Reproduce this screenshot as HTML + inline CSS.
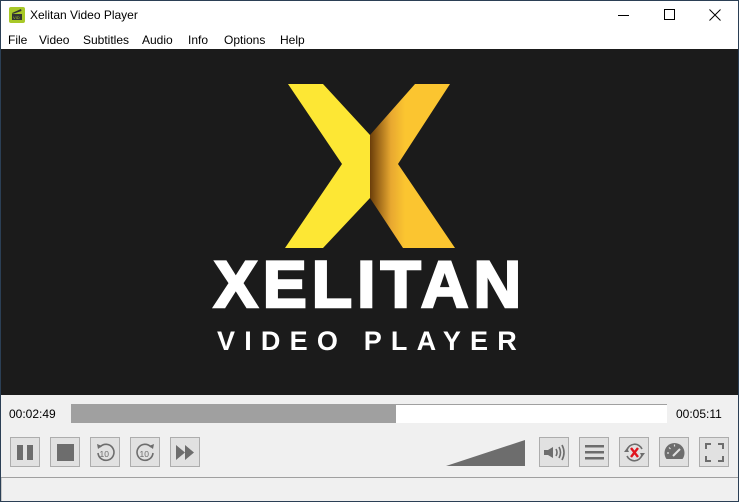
<!DOCTYPE html>
<html><head><meta charset="utf-8"><style>
*{margin:0;padding:0;box-sizing:border-box}
body{width:739px;height:502px;overflow:hidden;background:#f0f0f0;font-family:"Liberation Sans",sans-serif;position:relative}
.win{position:absolute;left:0;top:0;width:739px;height:502px}
.frame{position:absolute;left:0;top:0;width:739px;height:502px;border:1px solid #2b3f55;pointer-events:none}
.abs{position:absolute}
.title{left:1px;top:1px;width:737px;height:30px;background:#fff}
.menu{left:1px;top:31px;width:737px;height:18px;background:#fff;font-size:12px}
.menu span{position:absolute;top:2px}
.video{left:1px;top:49px;width:737px;height:346px;background:#1b1b1b}
.btn{position:absolute;top:437px;width:30px;height:30px;border:1px solid #adadad;background:#e1e1e1}
.btn svg{position:absolute;left:0;top:0}
</style></head><body><div class="win">
<div class="abs title">
 <svg class="abs" style="left:8px;top:6px" width="16" height="16"><rect width="16" height="16" rx="2" fill="#a8c828"/><rect x="3" y="7" width="10" height="6" fill="#333"/><path d="M3 6 L12 2 L12.5 4 L3.5 7Z" fill="#333"/><text x="4" y="12" font-size="4" fill="#a8c828">VID</text></svg>
 <div class="abs" style="left:29px;top:7px;font-size:12px;color:#000">Xelitan Video Player</div>
 <div class="abs" style="left:617px;top:14px;width:11px;height:1px;background:#000"></div>
 <div class="abs" style="left:663px;top:8px;width:11px;height:11px;border:1px solid #000"></div>
 <svg class="abs" style="left:708px;top:8px" width="12" height="12"><path d="M0.5 0.5L11.5 11.5M11.5 0.5L0.5 11.5" stroke="#000" stroke-width="1"/></svg>
</div>
<div class="abs menu">
 <span style="left:7px">File</span><span style="left:38px">Video</span><span style="left:82px">Subtitles</span><span style="left:141px">Audio</span><span style="left:187px">Info</span><span style="left:223px">Options</span><span style="left:279px">Help</span>
</div>
<div class="abs video">
 <svg width="737" height="346" style="position:absolute;left:0;top:0">
  <defs><linearGradient id="g" x1="370" x2="405" y1="0" y2="0" gradientUnits="userSpaceOnUse"><stop offset="0" stop-color="#6b3e0a"/><stop offset="0.6" stop-color="#e8a830"/><stop offset="1" stop-color="#fbc530"/></linearGradient></defs>
  <g transform="translate(-1,-49)">
  <polygon points="288,84 323,84 370,135 370,198 323,248 285,248 342,164" fill="#fde734"/>
  <polygon points="415,84 450,84 398,164 455,248 403,248 370,198 370,135" fill="url(#g)"/>
  </g>
 </svg>
 <div class="abs" style="left:207px;top:200px;width:324px;text-align:center;font-size:66px;font-weight:bold;color:#fff;letter-spacing:5px;line-height:70px;-webkit-text-stroke:2.5px #fff">XELITAN</div>
 <div class="abs" style="left:216px;top:277px;width:320px;font-size:27px;font-weight:bold;color:#fff;letter-spacing:9.2px;line-height:30px;white-space:nowrap">VIDEO PLAYER</div>
</div>
<div class="abs" style="left:9px;top:407px;font-size:12px;color:#000">00:02:49</div>
<div class="abs" style="left:71px;top:404px;width:596px;height:19px;background:#fff;border-top:1px solid #a0a0a0"></div>
<div class="abs" style="left:71px;top:404px;width:325px;height:19px;background:#a0a0a0"></div>
<div class="abs" style="left:676px;top:407px;font-size:12px;color:#000">00:05:11</div>
<div class="btn" style="left:10px"><svg width="30" height="30"><rect x="6" y="7" width="6" height="15" fill="#6d6d6d"/><rect x="16" y="7" width="6" height="15" fill="#6d6d6d"/></svg></div>
<div class="btn" style="left:50px"><svg width="30" height="30"><rect x="6" y="6" width="17" height="17" fill="#6d6d6d"/></svg></div>
<div class="btn" style="left:90px"><svg width="30" height="30"><path d="M9 9 A8 8 0 1 1 7 15" fill="none" stroke="#6d6d6d" stroke-width="1.6"/><path d="M6 6 L11 8 L7 11Z" fill="#6d6d6d"/><text x="8.5" y="19" font-size="8.5" fill="#6d6d6d" font-family="Liberation Sans">10</text></svg></div>
<div class="btn" style="left:130px"><svg width="30" height="30"><path d="M20 9 A8 8 0 1 0 22 15" fill="none" stroke="#6d6d6d" stroke-width="1.6"/><path d="M23 6 L18 8 L22 11Z" fill="#6d6d6d"/><text x="8.5" y="19" font-size="8.5" fill="#6d6d6d" font-family="Liberation Sans">10</text></svg></div>
<div class="btn" style="left:170px"><svg width="30" height="30"><path d="M5 7 L14 14.5 L5 22Z M14 7 L23 14.5 L14 22Z" fill="#6d6d6d"/></svg></div>
<svg class="abs" style="left:446px;top:440px" width="80" height="27"><polygon points="0,26 79,0 79,26" fill="#6d6d6d"/></svg>
<div class="btn" style="left:539px"><svg width="30" height="30"><path d="M4 12 H8 L13 9 V20 L8 17 H4Z" fill="#6d6d6d"/><path d="M16 11 Q18 14.5 16 18 M19 9 Q22 14.5 19 20 M22 7 Q26 14.5 22 22" fill="none" stroke="#6d6d6d" stroke-width="1.6"/></svg></div>
<div class="btn" style="left:579px"><svg width="30" height="30"><rect x="5" y="7" width="19" height="2.5" fill="#6d6d6d"/><rect x="5" y="13" width="19" height="2.5" fill="#6d6d6d"/><rect x="5" y="19" width="19" height="2.5" fill="#6d6d6d"/></svg></div>
<div class="btn" style="left:619px"><svg width="30" height="30"><path d="M7 12 A8 8 0 0 1 22 11 M22 17 A8 8 0 0 1 7 18" fill="none" stroke="#6d6d6d" stroke-width="1.6"/><path d="M4 14 L7 10 L9 14Z M25 15 L22 19 L20 15Z" fill="#6d6d6d"/><path d="M11 10 L18 19 M18 10 L11 19" stroke="#e0141e" stroke-width="2.4"/></svg></div>
<div class="btn" style="left:659px"><svg width="30" height="30"><defs><clipPath id="c"><rect x="0" y="0" width="30" height="21"/></clipPath></defs><circle cx="14.5" cy="15" r="10" fill="#6d6d6d" clip-path="url(#c)"/><path d="M13 18 L20 11" stroke="#e1e1e1" stroke-width="2"/><path d="M7 15 h2 M9 9.5 l1.5 1.5 M14.5 6.5 v2" stroke="#e1e1e1" stroke-width="1.2"/></svg></div>
<div class="btn" style="left:699px"><svg width="30" height="30"><path d="M6 11 V6 H11 M18 6 H23 V11 M23 18 V23 H18 M11 23 H6 V18" fill="none" stroke="#6d6d6d" stroke-width="2"/></svg></div>
<div class="abs" style="left:1px;top:477px;width:737px;height:1px;background:#a0a0a0"></div>
<div class="abs" style="left:1px;top:478px;width:1px;height:23px;background:#c8c8c8"></div>
</div><div class="frame"></div></body></html>
